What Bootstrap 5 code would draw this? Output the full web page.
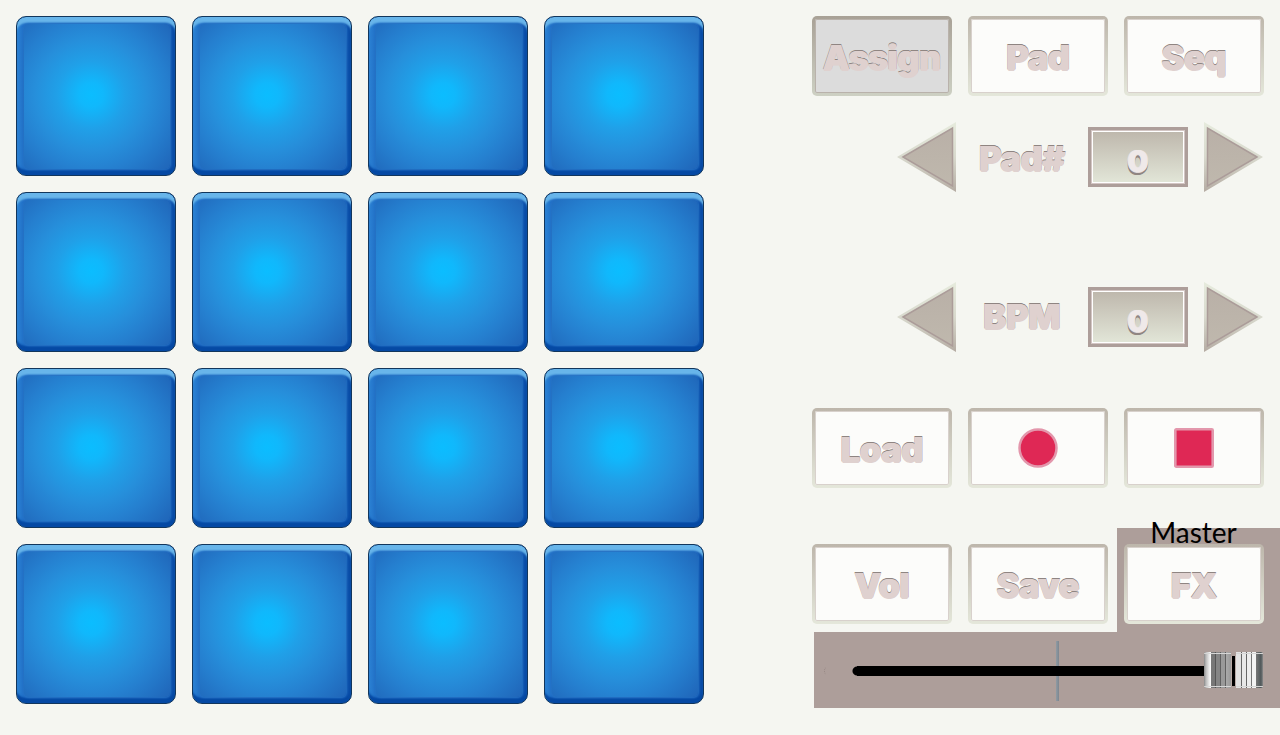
<!DOCTYPE html>
<html lang="en">
<head>
<meta charset="utf-8">
<meta name="viewport" content="width=device-width, initial-scale=1">
<title>Drum pads</title>
<link href="https://cdn.jsdelivr.net/npm/bootstrap@5.3.0/dist/css/bootstrap.min.css" rel="stylesheet">
<script src="https://cdn.jsdelivr.net/npm/bootstrap@5.3.0/dist/js/bootstrap.bundle.min.js" defer></script>
<style>
  :root { --mauve: #ad9e9a; --ink: #dfd1cf; --edge: #8f8582; }
  body { background: #f5f6f1; font-family: Inter, "Liberation Sans", sans-serif; }

  .pad-grid { display: grid; grid-template-columns: repeat(4, minmax(0, 160px)); flex: 0 1 688px; }
  .drum {
    aspect-ratio: 1; padding: 0; border-radius: 10px;
    border: 1px solid #12365c;
    background: linear-gradient(90deg, #2b82d4, #1f6cc4 8px, #1659b4 calc(100% - 8px), #0549a4);
    box-shadow: inset 0 7px 2px -1px #68b5ea, inset 0 -6px 2px -1px #0549a4;
    position: relative;
  }
  .drum::after {
    content: ""; position: absolute; inset: 7px 5px 6px 7px; border-radius: 5px;
    background: radial-gradient(circle at 46% 49%, #0bbdff 0, #10b8fc 12px, #20a0e8 34px, #268fdb 56px, #257fcf 76px, #2068bb 104px);
    box-shadow: 0 0 2px 1px #2572c4;
  }
  .drum:active::after { filter: brightness(1.15); }

  /* heavy rounded lettering with a dark upper rim */
  .puffy {
    font-size: 34px; font-weight: 800; line-height: 36px; color: var(--ink);
    text-shadow:
      1px 0 var(--ink), -1px 0 var(--ink), 0 1px var(--ink),
      0 -1px var(--edge), 1px -1px var(--edge), -1px -1px var(--edge);
  }

  .side { flex: 0 0 468px; }
  .key {
    width: 140px; height: 80px; padding: 0; border: 3px solid transparent; border-radius: 5px;
    background: linear-gradient(#fcfcfa, #fcfcfa) padding-box, linear-gradient(#bdb6ab, #e4e7da) border-box;
    box-shadow: inset 0 0 0 1px #d8d1cc;
  }
  .key.puffy { padding-top: 4px; }
  .key.held { background: linear-gradient(#dcdcdc, #dcdcdc) padding-box, linear-gradient(#a8a196, #cdd0c3) border-box; box-shadow: inset 0 0 0 1px #b9b2ab; }
  .step { border: 0; padding: 0; background: none; width: 60px; height: 70px; }
  .step svg { display: block; }
  .step-name { width: 100px; text-align: center; }
  .readout {
    width: 100px; height: 60px; padding: 7px 0 0; text-align: center;
    border: 3px solid var(--mauve); border-radius: 0;
    background: linear-gradient(#bdb6ab, #e3e7d9);
    box-shadow: inset 0 0 0 1px #d3c6c4, inset 0 0 0 2px #fff;
    font-size: 30px; font-weight: 800; color: #efe9e9;
    text-shadow: 1px 0 #ece6e6, -1px 0 #ece6e6, 0 1px #e3dada, 0 3px #8f8582, -1px 3px #8f8582, 1px 2px #8f8582;
  }

  .fx-box { background: var(--mauve); padding: 16px 16px 8px 7px; margin-left: 9px; }
  .fx-name {
    position: absolute; left: 0; right: 0; top: -14px; padding-right: 10px; text-align: center;
    font-family: Lato, sans-serif; font-size: 28px; font-weight: 400; line-height: 36px; color: #000;
    pointer-events: none;
  }
  .fader-box { background: var(--mauve); height: 76px; margin-left: 2px; padding: 2px 17px 0 10px; }
  .notch { width: 10px; height: 10px; border: 1px dotted transparent; border-left-color: #958783; border-radius: 5px; margin-right: 18px; }
  .fader {
    appearance: none; -webkit-appearance: none; display: block; width: 100%; height: 60px; margin: 0;
    background:
      linear-gradient(#000, #000) 5px 50% / calc(100% - 10px) 10px no-repeat,
      radial-gradient(circle, #000 4px, transparent 5px) 0 50% / 10px 10px no-repeat,
      linear-gradient(90deg, #8f9ba4, #7d868f) 50% 0 / 3px 100% no-repeat;
  }
  .fader::-webkit-slider-runnable-track { background: none; height: 60px; }
  .fader::-webkit-slider-thumb {
    -webkit-appearance: none; width: 59px; height: 36px; margin-top: 11px; border-radius: 2px;
    background:
      linear-gradient(#d6d6d6, #d6d6d6) 0 1px / 27px 1px no-repeat,
      linear-gradient(#d6d6d6, #d6d6d6) 0 34px / 27px 1px no-repeat,
      linear-gradient(#d6d6d6, #d6d6d6) 32px 1px / 27px 1px no-repeat,
      linear-gradient(#d6d6d6, #d6d6d6) 32px 34px / 27px 1px no-repeat,
      linear-gradient(var(--mauve), var(--mauve)) 27px 0 / 5px 4px no-repeat,
      linear-gradient(var(--mauve), var(--mauve)) 27px 34px / 5px 2px no-repeat,
      linear-gradient(90deg,
        #888 0, #bbb 2px, #e6e6e6 5px, #fff 7px, #777 7px, #777 11px, #555 11px, #555 12px,
        #858585 12px, #858585 16px, #606060 16px, #606060 17px, #999 17px, #999 21px, #606060 21px, #606060 22px,
        #aaa 22px, #999 27px, #b8aaa6 27px, #b8aaa6 28px, #000 28px, #000 31px, #b8aaa6 31px, #b8aaa6 32px, #e2e2e2 32px, #e2e2e2 37px,
        #666 37px, #666 38px, #e8e8e8 38px, #e8e8e8 42px, #666 42px, #666 43px, #ededed 43px, #ededed 47px,
        #777 47px, #777 48px, #f4f4f4 48px, #f4f4f4 52px, #777 52px, #50585a 57px, #8a8a8a 59px);
  }
  .steppers { gap: 90px; padding-top: 26px; }
  .transport { padding-top: 56px; }
  .mixer { padding-top: 40px; }
</style>
</head>
<body>
<svg class="position-absolute" width="0" height="0" aria-hidden="true">
  <defs>
    <linearGradient id="rim" x1="0" y1="0" x2="0" y2="1"><stop offset="0" stop-color="#e6ebdd"/><stop offset=".5" stop-color="#d8d9cd"/><stop offset="1" stop-color="#b5aca3"/></linearGradient>
    <linearGradient id="face" x1="0" y1="0" x2="0" y2="1"><stop offset="0" stop-color="#b9b0a7"/><stop offset="1" stop-color="#bfb8ad"/></linearGradient>
    <symbol id="arrow-left" viewBox="0 0 60 70"><path d="M1 35L60 0V70Z" fill="url(#rim)"/><path d="M7 35L56.500 6V64Z" fill="url(#face)" stroke="#ab9c99" stroke-width="1.500"/></symbol>
    <symbol id="arrow-right" viewBox="0 0 60 70"><path d="M59 35L0 0V70Z" fill="url(#rim)"/><path d="M53 35L3.500 6V64Z" fill="url(#face)" stroke="#ab9c99" stroke-width="1.500"/></symbol>
  </defs>
</svg>
<main class="d-flex justify-content-between align-items-start">
  <section class="pad-grid gap-3 m-3" aria-label="Pads">
    <button class="drum" aria-label="1"></button><button class="drum" aria-label="2"></button>
    <button class="drum" aria-label="3"></button><button class="drum" aria-label="4"></button>
    <button class="drum" aria-label="5"></button><button class="drum" aria-label="6"></button>
    <button class="drum" aria-label="7"></button><button class="drum" aria-label="8"></button>
    <button class="drum" aria-label="9"></button><button class="drum" aria-label="10"></button>
    <button class="drum" aria-label="11"></button><button class="drum" aria-label="12"></button>
    <button class="drum" aria-label="13"></button><button class="drum" aria-label="14"></button>
    <button class="drum" aria-label="15"></button><button class="drum" aria-label="16"></button>
  </section>

  <section class="side pt-3" aria-label="Controls">
    <div class="d-flex gap-3 pe-3">
      <button class="key held puffy">Assign</button>
      <button class="key puffy">Pad</button>
      <button class="key puffy">Seq</button>
    </div>

    <div class="steppers d-flex flex-column pe-3">
      <div class="d-flex gap-3 justify-content-end align-items-center">
        <button class="step" aria-label="Previous pad"><svg width="60" height="70"><use href="#arrow-left"/></svg></button>
        <label class="step-name puffy pt-1" for="padNo">Pad#</label>
        <input class="readout" id="padNo" inputmode="numeric" value="0">
        <button class="step" aria-label="Next pad"><svg width="60" height="70"><use href="#arrow-right"/></svg></button>
      </div>
      <div class="d-flex gap-3 justify-content-end align-items-center">
        <button class="step" aria-label="Slower"><svg width="60" height="70"><use href="#arrow-left"/></svg></button>
        <label class="step-name puffy" for="bpm">BPM</label>
        <input class="readout" id="bpm" inputmode="numeric" value="0">
        <button class="step" aria-label="Faster"><svg width="60" height="70"><use href="#arrow-right"/></svg></button>
      </div>
    </div>

    <div class="transport d-flex gap-3 pe-3">
      <button class="key puffy">Load</button>
      <button class="key" aria-label="Record"><svg class="d-block mx-auto" width="40" height="40"><circle cx="20" cy="20" r="18.5" fill="#df2855" stroke="#e397ac" stroke-width="2.5"/></svg></button>
      <button class="key" aria-label="Stop"><svg class="d-block mx-auto" width="40" height="40"><rect x="1.3" y="1.3" width="37.4" height="37.4" rx="1" fill="#df2855" stroke="#e397ac" stroke-width="2.6"/></svg></button>
    </div>

    <div class="mixer d-flex align-items-end">
      <div class="d-flex gap-3 pb-2">
        <button class="key puffy">Vol</button>
        <button class="key puffy">Save</button>
      </div>
      <div class="fx-box position-relative flex-grow-1">
        <label class="fx-name" for="master">Master</label>
        <button class="key puffy d-block">FX</button>
      </div>
    </div>
    <div class="fader-box d-flex align-items-center">
      <span class="notch"></span>
      <div class="flex-grow-1"><input class="fader" id="master" type="range" min="0" max="100" value="100"></div>
    </div>
  </section>
</main>
</body>
</html>
